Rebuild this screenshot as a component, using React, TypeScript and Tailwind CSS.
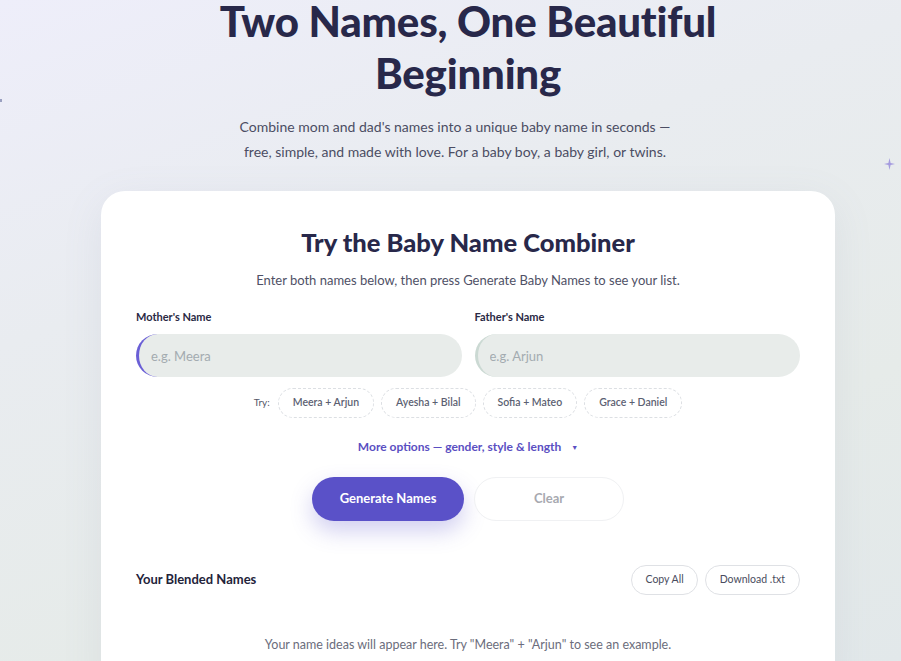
import { useState } from 'react';

const EXAMPLES = ['Meera + Arjun', 'Ayesha + Bilal', 'Sofia + Mateo', 'Grace + Daniel'];

export default function App() {
  const [mom, setMom] = useState('');
  const [dad, setDad] = useState('');

  return (
    <div className="relative h-[661px] overflow-hidden bg-[linear-gradient(160deg,#eeeefa_0%,#e9ecf0_35%,#e6ebe9_70%,#e2e8ea_100%)] font-['Lato','Open_Sans',sans-serif] text-[#2a2944]">
      {/* decorative sparkles */}
      <span className="absolute left-0 top-[99px] h-[3px] w-[2px] bg-[#9aa0c0]" />
      <svg className="absolute left-[884px] top-[158px]" width="11" height="12" viewBox="0 0 11 12">
        <path d="M5.5 0 L6.6 4.9 L11 6 L6.6 7.1 L5.5 12 L4.4 7.1 L0 6 L4.4 4.9 Z" fill="#a59cdf" />
      </svg>

      <div className="w-[936px]">
        <header className="flex flex-col items-center -mt-[5px]">
          <h1 className="text-center text-[42px] font-black leading-[52px] tracking-[-0.2px] text-[#28284a]">
            Two Names, One Beautiful
            <br />
            Beginning
          </h1>
          <p className="mt-[15px] mr-[26px] text-center text-[14px] leading-[25px] text-[#4b4d63]">
            Combine mom and dad's names into a unique baby name in seconds —
            <br />
            free, simple, and made with love. For a baby boy, a baby girl, or twins.
          </p>
        </header>

        <main className="mx-[101px] mt-[27px] rounded-[24px] bg-white px-[35px] pt-[36px] pb-[40px] shadow-[0_10px_40px_rgba(120,130,160,0.10)]">
          <h2 className="text-center text-[25.5px] font-black leading-[30px] text-[#28284a]">Try the Baby Name Combiner</h2>
          <p className="mt-[14px] text-center text-[13px] text-[#4f5166]">
            Enter both names below, then press Generate Baby Names to see your list.
          </p>

          <div className="mt-[18px] grid grid-cols-2 gap-[13px]">
            <label className="flex flex-col">
              <span className="text-[11px] font-bold text-[#2a2944]">Mother's Name</span>
              <input
                value={mom}
                onChange={e => setMom(e.target.value)}
                placeholder="e.g. Meera"
                className="mt-[9px] h-[43px] rounded-full border-l-[3px] border-[#6a5fd6] bg-[#e8ecea] px-[12px] text-[13px] text-[#2a2944] outline-none placeholder:text-[#a3abb0]"
              />
            </label>
            <label className="flex flex-col">
              <span className="text-[11px] font-bold text-[#2a2944]">Father's Name</span>
              <input
                value={dad}
                onChange={e => setDad(e.target.value)}
                placeholder="e.g. Arjun"
                className="mt-[9px] h-[43px] rounded-full border-l-[3px] border-[#cbd9d3] bg-[#e8ecea] px-[12px] text-[13px] text-[#2a2944] outline-none placeholder:text-[#a3abb0]"
              />
            </label>
          </div>

          <div className="mt-[11px] flex items-center justify-center gap-[7px]">
            <span className="mr-[1px] -mt-[2px] text-[10px] text-[#555869]">Try:</span>
            {EXAMPLES.map(ex => (
              <button
                key={ex}
                onClick={() => {
                  const [a, b] = ex.split(' + ');
                  setMom(a);
                  setDad(b);
                }}
                className="h-[30px] rounded-full border border-dashed border-[#dcdfe3] bg-white px-[14px] text-[10.5px] font-semibold text-[#5c5f72]"
              >
                {ex}
              </button>
            ))}
          </div>

          <div className="mt-[20px] flex items-center justify-center gap-[10px] text-[12px] font-bold text-[#5a4fc2]">
            More options — gender, style &amp; length
            <span className="text-[7px] leading-none">▼</span>
          </div>

          <div className="mt-[21px] flex justify-center gap-[10px]">
            <button className="h-[44px] w-[152px] rounded-full bg-[#5a51c8] text-[13px] font-bold text-white shadow-[0_10px_22px_rgba(90,81,200,0.28)]">
              Generate Names
            </button>
            <button className="h-[44px] w-[150px] rounded-full border border-[#f0f1f3] bg-white text-[13px] font-bold text-[#a7a9b0]">
              Clear
            </button>
          </div>

          <div className="mt-[44px] flex items-center justify-between">
            <h3 className="text-[13px] font-bold text-[#23233a]">Your Blended Names</h3>
            <div className="flex gap-[7px]">
              <button className="h-[30px] rounded-full border border-[#dfe1e5] bg-white px-[13px] text-[10.5px] text-[#4a4c5e]">
                Copy All
              </button>
              <button className="h-[30px] rounded-full border border-[#dfe1e5] bg-white px-[14px] text-[10.5px] text-[#4a4c5e]">
                Download .txt
              </button>
            </div>
          </div>

          <p className="mt-[41px] text-center text-[12.5px] text-[#6b6d7c]">
            Your name ideas will appear here. Try "Meera" + "Arjun" to see an example.
          </p>
        </main>
      </div>
    </div>
  );
}
